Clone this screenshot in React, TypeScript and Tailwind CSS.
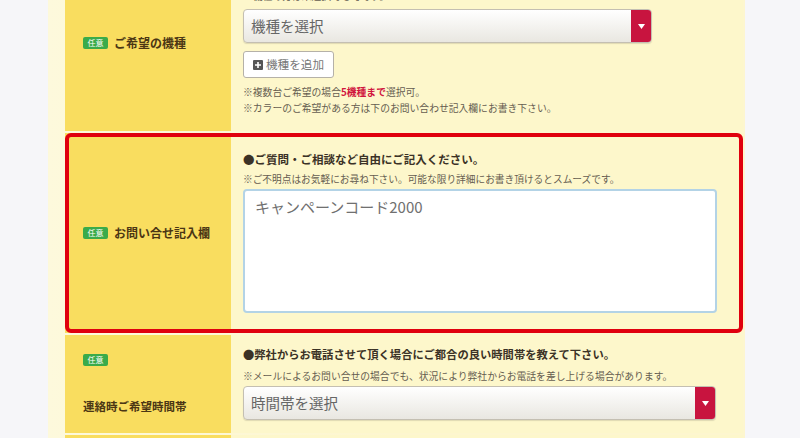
import { ReactNode } from 'react'

const jp = { fontFamily: '"Noto Sans CJK JP", "Noto Sans", sans-serif' }

function Badge() {
  return (
    <span className="inline-flex items-center justify-center w-[25px] h-[12px] rounded-[2px] bg-[#3aab4a] text-white text-[8px] leading-none">
      任意
    </span>
  )
}

function SelectBox({ label, width }: { label: string; width: string }) {
  return (
    <div className={`${width} h-[34px] flex rounded-[4px] border border-[#c4bfb2] bg-gradient-to-b from-white to-[#e9e7e1] shadow-[0_1px_1px_rgba(0,0,0,0.12)] overflow-hidden`}>
      <div className="flex-1 flex items-center pl-[7px] text-[14.5px] text-[#666]">{label}</div>
      <div className="w-[20px] bg-[#c8143f] flex items-center justify-center">
        <svg width="7" height="5" viewBox="0 0 7 5">
          <path d="M0 0 L7 0 L3.5 5 Z" fill="#fff" />
        </svg>
      </div>
    </div>
  )
}

function Row({ label, children, highlight }: { label: ReactNode; children: ReactNode; highlight?: boolean }) {
  return (
    <div className="relative grid grid-cols-[166px_1fr]">
      <div className="bg-[#f9dd5f] flex items-center pl-[18px]">{label}</div>
      <div className="bg-[#fdf7cb] pl-[12px]">{children}</div>
      {highlight && (
        <div className="absolute inset-0 border-4 border-[#e0000e] rounded-[6px] pointer-events-none" />
      )}
    </div>
  )
}

export default function App() {
  return (
    <div className="w-[800px] h-[438px] overflow-hidden bg-[#f6f6f9]" style={jp}>
      <div className="ml-[48px] w-[697px] mt-[-46px] pl-[17px] pr-[2px] bg-gradient-to-r from-[#fdf9dc] via-[#fdf6cf] to-[#fdf6cf] flex flex-col gap-[2px]">
        <Row
          label={
            <div className="flex items-center gap-[6px]">
              <Badge />
              <span className="text-[12px] font-bold text-[#4b3614]">ご希望の機種</span>
            </div>
          }
        >
          <div className="pt-[16px] pb-[15px]">
            <div className="h-[18px] leading-[18px] text-[11.5px] font-bold text-[#3b3226]">●ご希望の機種をお選び下さい。</div>
            <div className="h-[16px] leading-[16px] text-[9.8px] text-[#655d50]">※機種の方は未選択でも可です。</div>
            <div className="mt-[5px]">
              <SelectBox label="機種を選択" width="w-[409px]" />
            </div>
            <button className="mt-[8px] w-[91px] h-[27px] flex items-center justify-center gap-[3px] bg-white border border-[#b5b1a8] rounded-[3px] text-[11.6px] text-[#777]">
              <svg width="10" height="10" viewBox="0 0 10 10">
                <rect width="10" height="10" rx="1" fill="#555" />
                <path d="M5 2v6M2 5h6" stroke="#fff" strokeWidth="1.6" />
              </svg>
              機種を追加
            </button>
            <div className="mt-[6px] text-[9.8px] leading-[16px] text-[#655d50]">
              <div>
                ※複数台ご希望の場合<span className="text-[#d0163f] font-bold">5機種まで</span>選択可。
              </div>
              <div>※カラーのご希望がある方は下のお問い合わせ記入欄にお書き下さい。</div>
            </div>
          </div>
        </Row>

        <Row
          highlight
          label={
            <div className="flex items-center gap-[6px]">
              <Badge />
              <span className="text-[12px] font-bold text-[#4b3614]">お問い合せ記入欄</span>
            </div>
          }
        >
          <div className="pt-[17px] pb-[20px]">
            <div className="h-[18px] leading-[18px] text-[11.5px] font-bold text-[#3b3226]">
              ●ご質問・ご相談など自由にご記入ください。
            </div>
            <div className="mt-[3px] h-[16px] leading-[16px] text-[9.7px] text-[#655d50]">
              ※ご不明点はお気軽にお尋ね下さい。可能な限り詳細にお書き頂けるとスムーズです。
            </div>
            <div className="mt-[2px] w-[474px] h-[124px] bg-white border-2 border-[#b3d3e6] rounded-[4px] px-[10px] pt-[5px] text-[15px] text-[#707070]">
              キャンペーンコード2000
            </div>
          </div>
        </Row>

        <Row
          label={
            <div className="flex flex-col items-start gap-[32px]">
              <Badge />
              <span className="text-[11.5px] leading-[16px] font-bold text-[#4b3614]">連絡時ご希望時間帯</span>
            </div>
          }
        >
          <div className="pt-[10px] pb-[13px]">
            <div className="h-[18px] leading-[18px] text-[11.3px] font-bold text-[#3b3226]">
              ●弊社からお電話させて頂く場合にご都合の良い時間帯を教えて下さい。
            </div>
            <div className="mt-[5px] h-[16px] leading-[16px] text-[9.8px] text-[#655d50]">
              ※メールによるお問い合せの場合でも、状況により弊社からお電話を差し上げる場合があります。
            </div>
            <div className="mt-[2px]">
              <SelectBox label="時間帯を選択" width="w-[473px]" />
            </div>
          </div>
        </Row>

        <Row label={<span />}>
          <div className="h-[40px]" />
        </Row>
      </div>
    </div>
  )
}
